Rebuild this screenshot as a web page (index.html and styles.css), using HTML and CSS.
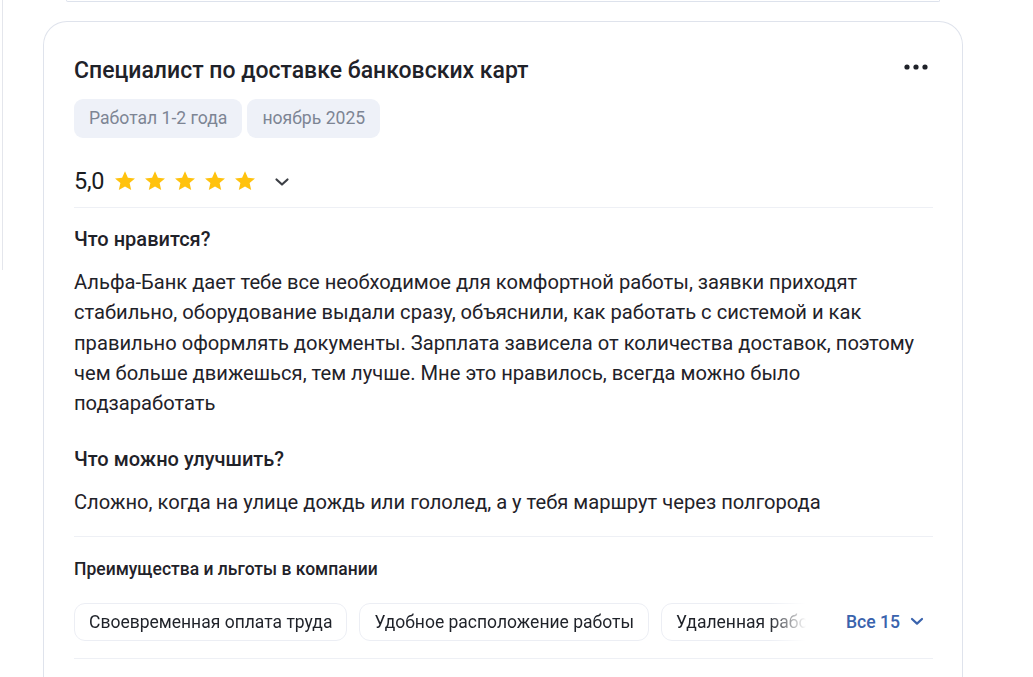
FILE: index.html
```html
<!DOCTYPE html>
<html lang="ru">
<head>
<meta charset="utf-8">
<link rel="stylesheet" href="styles.css">
</head>
<body>
<div class="layout">
  <div class="side"></div>
  <div class="main">
    <div class="prev-card"></div>
    <article class="card">
      <header class="card-head">
        <h2 class="title">Специалист по доставке банковских карт</h2>
        <button class="more" aria-label="Ещё">
          <svg width="24" height="6" viewBox="0 0 24 6"><circle cx="3" cy="3" r="2.6" fill="#1f2229"/><circle cx="12" cy="3" r="2.6" fill="#1f2229"/><circle cx="21" cy="3" r="2.6" fill="#1f2229"/></svg>
        </button>
      </header>
      <div class="tags">
        <span class="tag">Работал 1-2 года</span>
        <span class="tag">ноябрь 2025</span>
      </div>
      <div class="rating">
        <span class="score">5,0</span>
        <div class="stars">
          <svg class="star" viewBox="0 0 24 24"><path d="M12 2.2l2.9 6.6 7.1.6-5.4 4.7 1.6 7-6.2-3.7-6.2 3.7 1.6-7L2 9.4l7.1-.6z"/></svg>
          <svg class="star" viewBox="0 0 24 24"><path d="M12 2.2l2.9 6.6 7.1.6-5.4 4.7 1.6 7-6.2-3.7-6.2 3.7 1.6-7L2 9.4l7.1-.6z"/></svg>
          <svg class="star" viewBox="0 0 24 24"><path d="M12 2.2l2.9 6.6 7.1.6-5.4 4.7 1.6 7-6.2-3.7-6.2 3.7 1.6-7L2 9.4l7.1-.6z"/></svg>
          <svg class="star" viewBox="0 0 24 24"><path d="M12 2.2l2.9 6.6 7.1.6-5.4 4.7 1.6 7-6.2-3.7-6.2 3.7 1.6-7L2 9.4l7.1-.6z"/></svg>
          <svg class="star" viewBox="0 0 24 24"><path d="M12 2.2l2.9 6.6 7.1.6-5.4 4.7 1.6 7-6.2-3.7-6.2 3.7 1.6-7L2 9.4l7.1-.6z"/></svg>
        </div>
        <svg class="chev" width="16" height="10" viewBox="0 0 16 10"><path d="M2.5 2.5l5.5 5 5.5-5" fill="none" stroke="#3c3f45" stroke-width="2.2" stroke-linecap="round" stroke-linejoin="round"/></svg>
      </div>
      <section class="section">
        <h3 class="q">Что нравится?</h3>
        <p class="text">Альфа-Банк дает тебе все необходимое для комфортной работы, заявки приходят стабильно, оборудование выдали сразу, объяснили, как работать с системой и как правильно оформлять документы. Зарплата зависела от количества доставок, поэтому чем больше движешься, тем лучше. Мне это нравилось, всегда можно было подзаработать</p>
        <h3 class="q q2">Что можно улучшить?</h3>
        <p class="text">Сложно, когда на улице дождь или гололед, а у тебя маршрут через полгорода</p>
      </section>
      <section class="benefits">
        <h4 class="b-title">Преимущества и льготы в компании</h4>
        <div class="b-row">
          <div class="chips">
            <span class="chip">Своевременная оплата труда</span>
            <span class="chip">Удобное расположение работы</span>
            <span class="chip">Удаленная работа</span>
          </div>
          <button class="all">Все 15
            <svg width="14" height="9" viewBox="0 0 14 9"><path d="M2 2l5 4.6L12 2" fill="none" stroke="#3a63ad" stroke-width="2.2" stroke-linecap="round" stroke-linejoin="round"/></svg>
          </button>
        </div>
      </section>
    </article>
  </div>
</div>
</body>
</html>
```
FILE: styles.css
```css
* { box-sizing: border-box; }
html, body { margin: 0; padding: 0; background: #fff; }
body {
  font-family: Roboto, "Noto Sans", "Liberation Sans", sans-serif;
  color: #1f2229;
  overflow: hidden;
  height: 677px;
}
.layout { display: flex; align-items: flex-start; }
.side {
  width: 3px;
  height: 270px;
  border-right: 1px solid #e4e6ec;
  flex: none;
}
.main { padding-left: 40px; width: 960px; flex: none; }
.prev-card {
  height: 2px;
  margin: 0 23px 0 23px;
  border: 1px solid #dde2ec;
  border-top: none;
  border-radius: 0 0 6px 6px;
}
.card {
  margin-top: 19px;
  border: 1px solid #dfe3ec;
  border-bottom: none;
  border-radius: 24px 24px 0 0;
  padding: 32px 29px 20px 30px;
  height: 700px;
}
.card-head { display: flex; justify-content: space-between; align-items: center; height: 32px; }
.title { margin: 0; font-size: 23px; font-weight: 500; color: #1f2229; }
.more { background: none; border: none; padding: 0; margin-right: 5px; display: flex; margin-top: -7px; }
.tags { display: flex; gap: 5px; margin-top: 13px; }
.tag {
  background: #eef1f8;
  color: #7d8594;
  font-size: 17.6px;
  height: 39px;
  line-height: 39px;
  padding: 0 15px;
  border-radius: 9px;
}
.rating { display: flex; align-items: center; margin-top: 26px; height: 34px; }
.score { font-size: 23.5px; font-weight: 400; color: #1a1c21; letter-spacing: -0.3px; }
.stars { display: flex; gap: 6px; margin-left: 9px; }
.star { width: 24px; height: 24px; fill: #ffc20e; }
.chev { margin-left: 17px; margin-top: 2px; }
.section {
  border-top: 1px solid #eef0f5;
  margin-top: 9px;
  padding-top: 17px;
  padding-bottom: 18px;
}
.q { margin: 0; font-size: 20px; font-weight: 500; color: #1f2229; line-height: 28px; }
.q2 { margin-top: 27px; }
.text { margin: 14px 0 0; font-size: 20.15px; line-height: 30.25px; color: #1f2229; }
.benefits { border-top: 1px solid #eef0f5; padding-top: 20px; }
.b-title { margin: 0; font-size: 17.5px; font-weight: 500; line-height: 24px; color: #1f2229; }
.b-row { display: flex; align-items: center; margin-top: 22px; padding-bottom: 17px; border-bottom: 1px solid #eef0f5; }
.chips {
  display: flex; gap: 12px; overflow: hidden; width: 732px; flex: none;
  -webkit-mask-image: linear-gradient(to right, #000 695px, transparent 732px);
  mask-image: linear-gradient(to right, #000 695px, transparent 732px);
}
.chip {
  flex: none;
  border: 1px solid #eceef4;
  border-radius: 11px;
  height: 38px;
  line-height: 36px;
  padding: 0 14px;
  font-size: 17.5px;
  color: #1f2229;
  white-space: nowrap;
}
.all {
  margin-left: 40px;
  background: none; border: none; padding: 0;
  font-family: inherit; font-size: 17.6px; font-weight: 500; color: #3a63ad;
  display: flex; align-items: center; gap: 10px;
}
```
